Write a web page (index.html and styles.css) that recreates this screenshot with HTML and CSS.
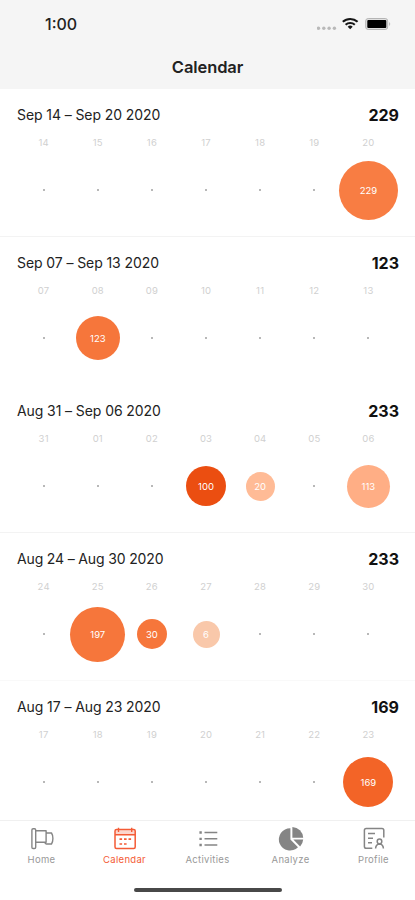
FILE: index.html
```
<!DOCTYPE html>
<html lang="en">
<head>
<meta charset="utf-8">
<meta name="viewport" content="width=device-width, initial-scale=1">
<title>Calendar</title>
<link rel="stylesheet" href="styles.css">
</head>
<body>
<div class="app">
  <header class="header">
    <div class="status">
      <span class="time">1:00</span>
      <svg class="status-icons" width="76" height="16" viewBox="0 0 76 16" aria-hidden="true">
        <g fill="#b9b9b9"><circle cx="1.5" cy="12.3" r="1.7"/><circle cx="6.8" cy="12.3" r="1.7"/><circle cx="12.1" cy="12.3" r="1.7"/><circle cx="17.4" cy="12.3" r="1.7"/></g>
        <g fill="none" stroke="#161616" stroke-width="2.1"><path d="M25.8 5.8a11 11 0 0 1 14.8 0"/><path d="M28.6 8.8a6.9 6.9 0 0 1 9.2 0"/></g>
        <path d="M33.2 13.2l-2.5-2.5a3.6 3.6 0 0 1 5 0z" fill="#161616"/>
        <rect x="48.7" y="2.5" width="22" height="11" rx="2.5" fill="#e0e0e0" stroke="#b5b5b5"/>
        <rect x="50.3" y="4" width="19" height="8" rx="1" fill="#000"/>
        <path d="M72.3 6q1.8 1.8 0 4z" fill="#aaa"/>
      </svg>
    </div>
    <h1>Calendar</h1>
  </header>
  <main class="weeks">
    <section class="week">
      <div class="summary"><h2>Sep 14 – Sep 20 2020</h2><strong>229</strong></div>
      <div class="grid dates"><span>14</span><span>15</span><span>16</span><span>17</span><span>18</span><span>19</span><span>20</span></div>
      <div class="grid values"><i></i><i></i><i></i><i></i><i></i><i></i><b class="bubble s229">229</b></div>
    </section>
    <section class="week plain">
      <div class="summary"><h2>Sep 07 – Sep 13 2020</h2><strong>123</strong></div>
      <div class="grid dates"><span>07</span><span>08</span><span>09</span><span>10</span><span>11</span><span>12</span><span>13</span></div>
      <div class="grid values"><i></i><b class="bubble s123">123</b><i></i><i></i><i></i><i></i><i></i></div>
    </section>
    <section class="week">
      <div class="summary"><h2>Aug 31 – Sep 06 2020</h2><strong>233</strong></div>
      <div class="grid dates"><span>31</span><span>01</span><span>02</span><span>03</span><span>04</span><span>05</span><span>06</span></div>
      <div class="grid values"><i></i><i></i><i></i><b class="bubble s100">100</b><b class="bubble s20">20</b><i></i><b class="bubble s113">113</b></div>
    </section>
    <section class="week faint">
      <div class="summary"><h2 class="tight">Aug 24 – Aug 30 2020</h2><strong>233</strong></div>
      <div class="grid dates"><span>24</span><span>25</span><span>26</span><span>27</span><span>28</span><span>29</span><span>30</span></div>
      <div class="grid values"><i></i><b class="bubble s197">197</b><b class="bubble s30">30</b><b class="bubble s6">6</b><i></i><i></i><i></i></div>
    </section>
    <section class="week">
      <div class="summary"><h2>Aug 17 – Aug 23 2020</h2><strong>169</strong></div>
      <div class="grid dates"><span>17</span><span>18</span><span>19</span><span>20</span><span>21</span><span>22</span><span>23</span></div>
      <div class="grid values"><i></i><i></i><i></i><i></i><i></i><i></i><b class="bubble s169">169</b></div>
    </section>
  </main>
  <footer class="footer">
    <nav class="tabs">
      <a class="tab">
        <svg width="26" height="26" viewBox="0 0 26 26"><g fill="none" stroke="currentColor" stroke-width="1.4" stroke-linejoin="round"><rect x="2.9" y="2.7" width="3.8" height="19.8" rx="1.2"/><path d="M6.7 4.7h10.4v11.6H6.7M17.1 7h5.4q1.4 2 1.4 5.6t-1.4 5.4h-5q-1.5-.2-1.5-1.6"/></g></svg>
        <span>Home</span>
      </a>
      <a class="tab active">
        <svg width="26" height="26" viewBox="0 0 26 26"><rect x="3" y="3.6" width="20.2" height="18.9" rx="1.5" fill="none" stroke="currentColor" stroke-width="1.5"/><path d="M3 4.2h20.2v4.5H3z" fill="currentColor" opacity=".25"/><path d="M3 8.8h20.2M6.5 1.8v4.1M19.7 1.8v4.1" stroke="currentColor" stroke-width="1.4"/><path d="M7.5 13.2h2.6M12 13.2h2.6M16.5 13.2h2.6M7.5 18h2.6M12 18h2.6" stroke="currentColor" stroke-width="1.7"/></svg>
        <span>Calendar</span>
      </a>
      <a class="tab">
        <svg width="26" height="26" viewBox="0 0 26 26"><g stroke="currentColor" stroke-width="1.5"><path d="M9.5 6.5h12.8M9.5 12.8h12.8M9.5 19h12.8"/><path d="M4.4 6.5h2.4M4.4 12.8h2.4M4.4 19h2.4" stroke-width="2.3"/></g></svg>
        <span>Activities</span>
      </a>
      <a class="tab">
        <svg width="26" height="26" viewBox="0 0 26 26"><g fill="currentColor"><path d="M12.4 2.2v11.2l7.6 7.9A11.2 11.2 0 1 1 12.4 2.2z"/><path d="M14.4.9a11.3 11.3 0 0 1 10.8 10.8H14.4z"/><path d="M15.3 13.6h9.9q-.3 4-3.1 6.8z"/></g></svg>
        <span>Analyze</span>
      </a>
      <a class="tab">
        <svg width="26" height="26" viewBox="0 0 26 26"><g fill="none" stroke="currentColor" stroke-width="1.5"><path d="M11.3 22.2H5.2q-1.8 0-1.8-1.8V4.2q0-1.8 1.8-1.8H21q1.8 0 1.8 1.8v7.2M7 7.6h7M7 12.2h5M7 16.8h4"/><circle cx="18.5" cy="15.4" r="2.3"/><path d="M14.6 22.5q.2-4 3.9-4.4 3.7.4 3.9 4.4"/></g></svg>
        <span>Profile</span>
      </a>
    </nav>
    <div class="home-bar"></div>
  </footer>
</div>
</body>
</html>
```
FILE: styles.css
```
* { box-sizing: border-box; }
body { margin: 0; background: #fff; color: #222; font-family: Inter, "Liberation Sans", sans-serif; }
h1, h2 { margin: 0; }
.app { width: 415px; height: 900px; display: flex; flex-direction: column; overflow: hidden; }
.header { flex: none; height: 89px; background: #f5f5f5; }
.status { height: 48px; padding: 0 22px 0 45px; display: flex; align-items: center; justify-content: space-between; }
.time { font-size: 16px; font-weight: 500; letter-spacing: 0; }
.status-icons { display: block; }
h1 { font-size: 16.5px; line-height: 38px; font-weight: 600; text-align: center; letter-spacing: -.1px; }
.weeks { flex: 1; min-height: 0; overflow: hidden; }
.week { height: 148px; padding: 13px 16px 0; border-bottom: 1px solid #f3f3f3; }
.week.plain { border-bottom-color: #fff; }
.week.faint { border-bottom-color: #f9f9f9; }
.summary { height: 25px; display: flex; justify-content: space-between; align-items: center; padding-left: 1px; }
h2 { font-size: 14px; font-weight: 400; letter-spacing: -.09px; white-space: nowrap; }
h2.tight { letter-spacing: -.15px; }
.summary strong { font-size: 16px; font-weight: 700; color: #111; }
.grid { display: grid; grid-template-columns: repeat(7, 54.13px); justify-items: center; align-items: center; padding-left: .6px; }
.dates { height: 30px; font-size: 9.5px; color: #d0d0d0; letter-spacing: .2px; }
.values { height: 66px; }
.values i { width: 2px; height: 2px; border-radius: 1px; background: #a0a0a0; }
.bubble { display: flex; align-items: center; justify-content: center; border-radius: 50%; color: #fff; font-size: 9.5px; font-weight: 400; }
.s229 { width: 59px; height: 59px; background: #f87d43; }
.s123 { width: 44px; height: 44px; background: #f6763b; }
.s100 { width: 40px; height: 40px; background: #eb4e11; }
.s20 { width: 29px; height: 29px; background: #ffbb96; }
.s113 { width: 43px; height: 43px; background: #ffae85; }
.s197 { width: 55px; height: 55px; background: #f6763b; }
.s30 { width: 30px; height: 30px; background: #f6763b; }
.s6 { width: 27px; height: 27px; background: #f9c8aa; }
.s169 { width: 50px; height: 50px; background: #f36427; }
.footer { flex: none; height: 80px; border-top: 1px solid #f0f0f0; background: #fff; }
.tabs { display: grid; grid-template-columns: repeat(5, 1fr); height: 66px; padding-top: 5px; }
.tab { display: flex; flex-direction: column; align-items: center; color: #858585; }
.tab svg { display: block; flex: none; }
.tab span { margin-top: 1px; font-size: 9.5px; line-height: 14px; letter-spacing: .3px; color: #999; }
.tab.active, .tab.active span { color: #f45b36; }
.home-bar { width: 148px; height: 4px; margin: 1px auto 0; border-radius: 2px; background: #484848; }
```
